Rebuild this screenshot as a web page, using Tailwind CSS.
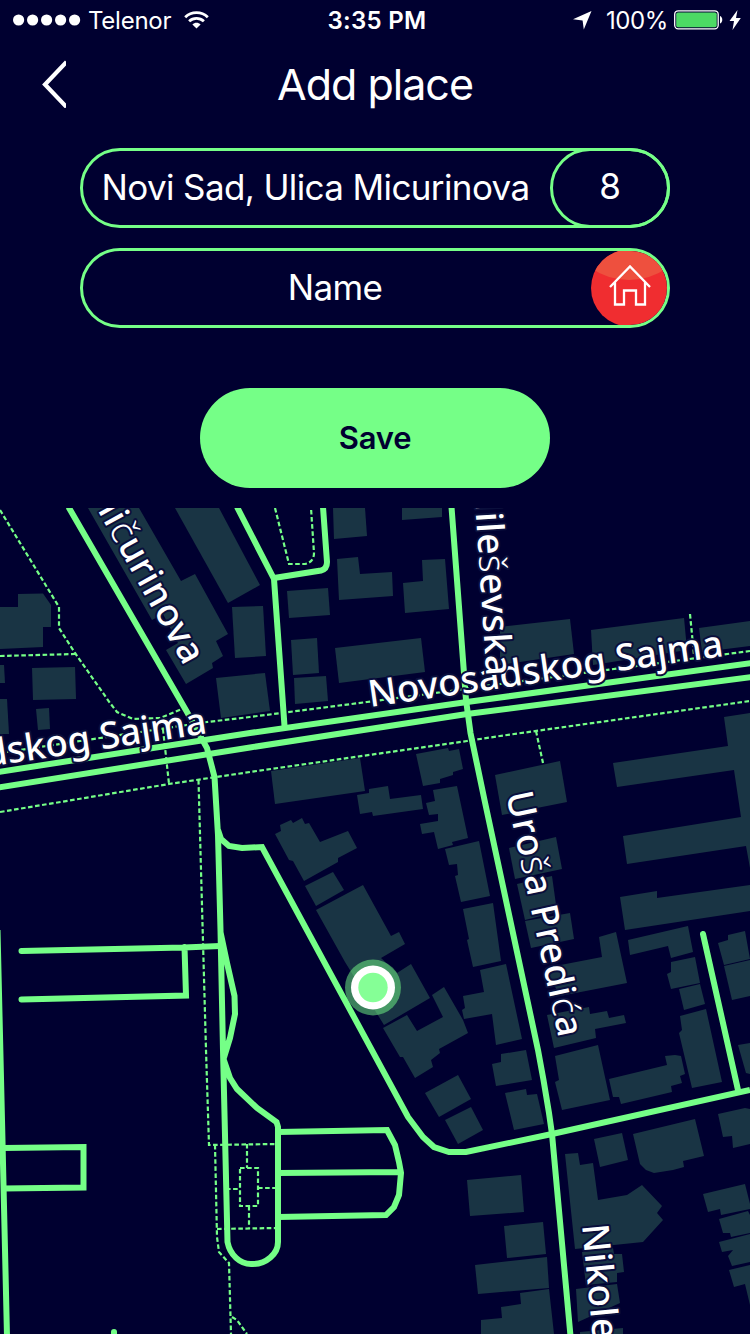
<!DOCTYPE html>
<html lang="en">
<head>
<meta charset="utf-8">
<title>Add place</title>
<script src="https://cdn.jsdelivr.net/npm/@tailwindcss/browser@4"></script>
</head>
<body class="bg-[#000030]">
<main class="flex h-[1334px] w-[750px] flex-col overflow-hidden bg-[#000030] font-['Inter',sans-serif] text-white">
  <!-- Status bar -->
  <header class="grid h-10 grid-cols-3 items-center pl-[13px] pr-[9px] text-[24px] leading-none">
    <div class="flex items-center">
      <svg class="h-[12px] w-[68px]" viewBox="0 0 68 12" fill="#fff"><circle cx="5.6" cy="6" r="5.6"/><circle cx="19.6" cy="6" r="5.6"/><circle cx="33.6" cy="6" r="5.6"/><circle cx="47.6" cy="6" r="5.6"/><circle cx="61.6" cy="6" r="5.6"/></svg>
      <span class="ml-[7px] pt-[2px] tracking-[-0.25px]">Telenor</span>
      <svg class="ml-[13px] h-[18px] w-[25px]" viewBox="0 0 25 18" fill="none" stroke="#fff" stroke-width="2.8"><path d="M1.2 6.2C7.5.1 17.5.1 23.800 6.200"/><path d="M5.100 10.200C9.300 6.300 15.700 6.300 19.900 10.200"/><path d="M12.500 17.600 8.400 13.400C10.700 11.300 14.300 11.300 16.600 13.400Z" fill="#fff" stroke="none"/></svg>
    </div>
    <div class="pt-[2px] text-center font-semibold tracking-[0.3px]">3:35 PM</div>
    <div class="flex items-center justify-end">
      <svg class="mr-[14px] h-[19px] w-[19px]" viewBox="0 0 19 19" fill="#fff"><path d="M18.500 0 10.800 18.500 9.600 9.500 0 8.300Z"/></svg>
      <span class="pt-[2px] tracking-[-0.4px]">100%</span>
      <svg class="ml-[6px] h-[20px] w-[49px]" viewBox="0 0 49 20"><rect x=".7" y=".8" width="43.500" height="18" rx="3.500" fill="none" stroke="#fff" stroke-width="1.300"/><rect x="2.200" y="2.400" width="40.500" height="14.800" rx="1.800" fill="#4cd964"/><path d="M46 6c3 1 3 6.500 0 7.500Z" fill="#fff"/></svg>
      <svg class="ml-[6px] h-[20px] w-[12px]" viewBox="0 0 12 20" fill="#fff"><path d="M8.500 0 .500 11H5L3.500 20 11.800 8H7Z"/></svg>
    </div>
  </header>

  <!-- Title bar -->
  <nav class="grid h-[88px] grid-cols-[80px_1fr_80px] items-center">
    <svg class="ml-[42px] h-[48px] w-[24px]" viewBox="0 0 24 48" fill="none" stroke="#fff" stroke-width="4.200"><path d="M24.500 2 3 24.500l21.500 22.500"/></svg>
    <h1 class="text-center text-[43px] leading-none tracking-[-1px]">Add place</h1>
  </nav>

  <!-- Form -->
  <form class="flex flex-col items-center pt-5">
    <div class="flex h-20 w-[590px] rounded-full border-3 border-[#75ff87]">
      <div class="flex flex-1 items-center justify-center pr-[2px] pb-[2px] text-[35px] leading-none tracking-[-0.62px] whitespace-nowrap">Novi Sad, Ulica Micurinova</div>
      <div class="-my-[3px] -mr-[3px] flex w-[120px] items-center justify-center rounded-full border-3 border-[#75ff87] pb-1 text-[35px] leading-none">8</div>
    </div>
    <div class="mt-5 flex h-20 w-[590px] overflow-hidden rounded-full border-3 border-[#75ff87]">
      <div class="flex flex-1 items-center justify-center pr-[4px] pb-[2px] text-[35px] leading-none tracking-[-0.6px]">Name</div>
      <svg class="-my-px h-[76px] w-[76px]" viewBox="0 0 76 76">
        <defs><clipPath id="disc"><circle cx="38.500" cy="38" r="38.500"/></clipPath></defs>
        <g clip-path="url(#disc)"><rect width="78" height="76" fill="#f02d30"/><ellipse cx="38" cy="-8" rx="52" ry="38" fill="#ee503e"/></g>
        <path d="M19 37 39 16.500 59 37M24 32V54.500H33V40.500H45V54.500H54V32" fill="none" stroke="#fff" stroke-width="2.300"/>
      </svg>
    </div>
    <button type="button" class="mt-[60px] flex h-[100px] w-[350px] items-center justify-center rounded-full bg-[#75ff87] pb-[2px] text-[31px] font-semibold leading-none tracking-[-0.2px] text-[#000030]">Save</button>
  </form>

  <!-- Map -->
  <svg class="mt-5 h-[826px] w-[750px] shrink-0" viewBox="0 508 750 826">
    <g fill="#193444">
      <path d="M0 607H18V594L43 593.500 51 605V627H43V647L0 649Z"/>
      <path d="M32 668 75 667 76 699 33 700Z"/><path d="M0 665H4L5 683H0Z"/><path d="M0 699H7L9 734H0Z"/><path d="M36 709 49 708 50 729 38 730Z"/>
      <path d="M88 508H139L181 581 195 574 228 634 216 641 223 656 212 663 213 668 186 684 166 650 178 643 163 614 152 620Z"/>
      <path d="M175 508H219L260 585 228 603Z"/><path d="M232 607 263 606 266 656 235 658Z"/><path d="M216 678 265 673 270 711 221 718Z"/>
      <path d="M333 508H365L367 536 334 539Z"/><path d="M402 508H442V517L402 520Z"/>
      <path d="M337 559 358 557 360 574 392 572 393 596 339 600Z"/><path d="M422 560 445 559 449 609 405 613 403 583 423 581Z"/>
      <path d="M287 591 328 588 330 615 289 618Z"/><path d="M291 640 317 638 319 673 293 675Z"/><path d="M294 678 326 676 328 701 295 704Z"/><path d="M335 648 421 638 425 672 339 683Z"/>
      <path d="M271 771 360 758 365 791 275 804Z"/><path d="M357 795 369 793V789L388 786 390 799 421 795 423 809 373 816 372 812 360 814Z"/>
      <path d="M416 754 448 748 449 751 459 749 463 769 453 772V775L440 779V783L423 786Z"/>
      <path d="M433 790 457 786 468 838 452 842 453 845 438 849 434 832 422 834 420 824 438 821V814L429 815 426 803 435 801Z"/>
      <path d="M500 627 570 619 574 654 500 665Z"/><path d="M591 630 684 618 687 650 593 665Z"/><path d="M699 628 750 621V646L702 652Z"/>
      <path d="M495 775 560 761 567 802 502 815Z"/>
      <path d="M724 717 750 713V868L746 846 627 864 623 836 741 817 734 770 617 787 613 763 728 746Z"/>
      <path d="M620 897 657 891V898L750 885V911L625 930Z"/>
      <path d="M509 848 556 837 562 869 515 879Z"/><path d="M517 884 552 876 557 912 525 920Z"/><path d="M525 921 570 913 574 939 531 948Z"/>
      <path d="M599 937 616 932 627 983 560 996 545 968 602 957Z"/>
      <path d="M547 1015 589 1007 590 1014 607 1011 609 1018 624 1015 626 1023 595 1029 596 1038 554 1048Z"/>
      <path d="M555 1056 598 1045 610 1100 562 1110 555 1082 559 1080Z"/>
      <path d="M628 940 688 926 693 952 671 958 668 946 630 955Z"/><path d="M671 962 695 957 700 983 671 989 667 974 671 972Z"/><path d="M679 989 700 984 705 1004 684 1010Z"/>
      <path d="M680 1016 706 1009 722 1082 692 1088 679 1033 682 1030Z"/>
      <path d="M609 1079 667 1065 665 1056 675 1055 681 1056 685 1074 680 1076 682 1083 671 1086 672 1092 621 1104 619 1097 613 1097Z"/>
      <path d="M718 943 728 940V935L745 931 750 959 724 965Z"/><path d="M724 966 750 960V996L732 1000Z"/><path d="M738 1045 750 1043V1074L746 1073Z"/>
      <path d="M445 849 479 841 490 896 461 902 455 876 458 875 457 864 449 865Z"/><path d="M463 909 493 903 501 961 473 967 467 940 469 939Z"/>
      <path d="M480 970 506 964 522 1039 496 1045 492 1014 464 1019 462 1010 465 1008 463 996 484 992Z"/>
      <path d="M492 1064 501 1062V1054L526 1050 532 1080 496 1086Z"/><path d="M505 1093 526 1089 527 1095 537 1094 544 1124 514 1130Z"/>
      <path d="M275 834 281 831 280 825 291 820 293 823 302 818 305 824 309 823 320 842 348 831 357 848 338 858V862L304 881 293 861 289 860Z"/>
      <path d="M305 886 333 872 344 890 316 906Z"/>
      <path d="M316 910 363 885 391 936 399 932 405 944 381 958 397 973 411 964 430 998 384 1025 345 962Z"/>
      <path d="M383 1028 407 1015 417 1031 443 1017 432 995 444 987 463 1020 468 1033 439 1049 440 1053 431 1060 433 1067 415 1078 403 1057H400Z"/>
      <path d="M425 1093 458 1075 471 1099 439 1117Z"/><path d="M445 1120 471 1107 483 1130 458 1144Z"/>
      <path d="M467 1180 521 1175 524 1212 470 1216Z"/><path d="M504 1226 543 1222 546 1254 507 1258Z"/><path d="M475 1265 547 1257 549 1288 478 1294Z"/>
      <path d="M481 1334V1320L502 1318 501 1307 521 1304 520 1293 549 1289 554 1334Z"/>
      <path d="M565 1154 578 1153 580 1165 593 1163 598 1200 627 1195 642 1185 662 1206 657 1213 663 1220 643 1242 575 1249Z"/>
      <path d="M594 1139 622 1133 628 1160 600 1167Z"/><path d="M633 1134 695 1119 704 1156 683 1161 684 1167 673 1170 654 1173 646 1170 640 1164Z"/>
      <path d="M718 1114 745 1108 750 1109V1144L733 1148 732 1136 723 1137Z"/><path d="M703 1194 745 1184 750 1204V1209L721 1215 720 1209 708 1212Z"/>
      <path d="M719 1219 748 1211 750 1215V1233L731 1237 730 1233 723 1233Z"/><path d="M719 1242 750 1234V1262L732 1266 728 1256 733 1250 722 1252Z"/><path d="M729 1270 750 1265V1305L745 1284 734 1287Z"/>
      <path d="M582 1252 613 1248 614 1254 622 1254 624 1272 617 1273V1282L586 1285Z"/><path d="M576 1289 617 1284 620 1303 578 1322Z"/><path d="M580 1332 623 1328V1334H580Z"/>
    </g>
    <g fill="none" stroke="#75ff87" stroke-width="2.200" stroke-dasharray="4.600 2.500">
      <path d="M0 510 59 607V628L75 653 110 703 117 712 133 719 160 718 182 709"/><path d="M0 656 75 654"/>
      <path d="M0 753 207 722 250 717 367 702 450 691 500 684 750 651"/><path d="M163 729 169 784"/>
      <path d="M0 812 169 784 250 772 467 741 500 736 750 701"/><path d="M536 731 543 763"/><path d="M690 614 694 655"/>
      <path d="M275 508 289 564H305Q314 562 314 553L311 508"/>
      <path d="M198.500 780 206 1050 209 1145 277 1144"/><path d="M215 1145 217 1237 219 1252 229 1263 231 1334"/><path d="M232 1317 237 1320 247 1334"/>
      <path d="M240 1168H258V1206H240Z"/><path d="M247 1144V1168M249 1206V1229M226 1189H240M258 1188H276M217 1229 277 1228"/>
    </g>
    <g fill="none" stroke="#75ff87" stroke-width="6">
      <path d="M68.500 507 187 712 207 748 214.500 777 218 835 220.500 930 223 1050 227.500 1242C230 1255 240 1264 251 1264H253C266 1264 278 1254 278 1242V1127L276.500 1122 257 1108 237 1089 230 1078 223.500 1059 230 1038 235 1014 234.500 996 227 963 220.500 932"/>
      <path d="M218 830 221 839 229 846 242 848 262 847 408 1117 423 1137 434 1147 449 1152H466L552 1134 750 1090"/>
      <path d="M451.500 507 466 700 470.500 733 484.500 800 538 1050 543.500 1080 549 1113 552 1134 570.500 1336"/>
      <path d="M-2 772 250 733 467 702 752 663"/><path d="M-2 787.500 250 747.500 467 714 752 677"/>
      <path d="M237 507 274 579 284.500 726"/><path d="M274 578 321 570.500Q327 569 327 562L323 507"/>
      <path d="M703 934 738 1090" stroke-linecap="round"/><path d="M-2.500 930 2 1120 7 1336"/>
      <path d="M21.500 951 184 947.500 220 946M184.500 947 186 995.500 21.500 999.500" stroke-linecap="round"/>
      <path d="M3 1148 83.500 1147V1187.500L3 1188.500"/><path d="M114 1332V1336" stroke-linecap="round"/>
      <path d="M278 1132 387 1130 395 1145 399 1162 401 1173 399 1195 394 1207 386 1215 278 1217M278 1173 401 1172"/>
    </g>
    <g class="font-['Noto_Sans',sans-serif]" fill="#fff" font-size="37" font-weight="500" style="paint-order:stroke" stroke="#0a0f3c" stroke-width="4" stroke-linejoin="round">
      <text transform="translate(370 707) rotate(-8.200)" textLength="358">Novosadskog Sajma</text>
      <text transform="translate(-144 787) rotate(-8.700)" textLength="356">Novosadskog Sajma</text>
      <text transform="translate(184.500 667) rotate(61)" text-anchor="end" letter-spacing=".7">Mi<tspan font-weight="300">č</tspan>urinova</text>
      <text transform="translate(486.500 677) rotate(86.300)" text-anchor="end" letter-spacing=".7">Mile<tspan font-weight="300">š</tspan>evska</text>
      <text transform="translate(506 794) rotate(77.800)" textLength="250">Uro<tspan font-weight="300">š</tspan>a Predi<tspan font-weight="300">ć</tspan>a</text>
      <text transform="translate(582 1225) rotate(84.500)" letter-spacing=".5">Nikole</text>
    </g>
    <circle cx="373" cy="987.500" r="28" fill="#75ff87" fill-opacity=".5"/>
    <circle cx="373" cy="987.500" r="22" fill="#fff"/>
    <circle cx="373" cy="987.500" r="14.700" fill="#85ff96"/>
  </svg>
</main>
</body>
</html>
